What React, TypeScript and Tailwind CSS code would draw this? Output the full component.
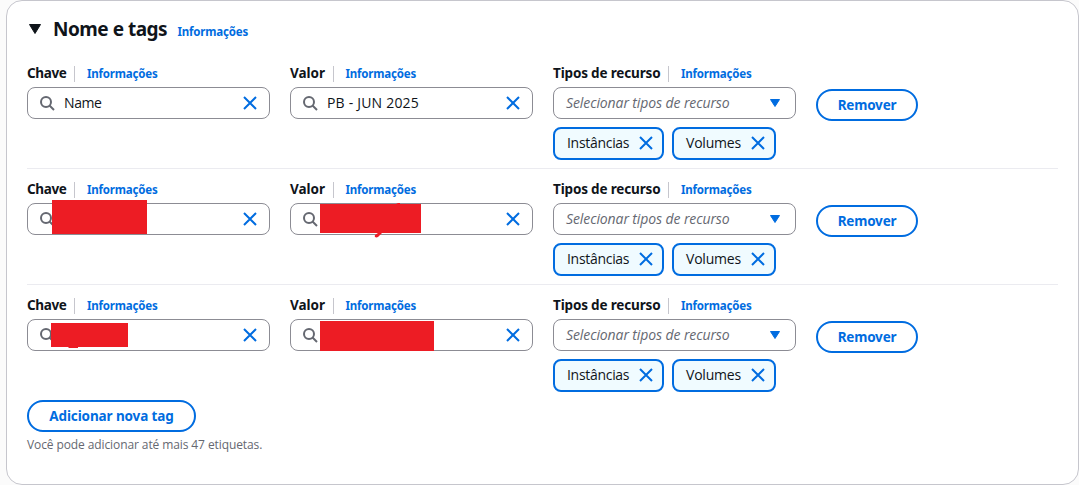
import type { ReactNode } from 'react';

function CloseIcon({ className = '' }: { className?: string }) {
  return (
    <svg viewBox="0 0 16 16" className={`h-4 w-4 shrink-0 ${className}`} fill="none" stroke="#006ce0" strokeWidth="2">
      <path d="m2 2 12 12M14 2 2 14" />
    </svg>
  );
}

function SearchIcon() {
  return (
    <svg viewBox="0 0 16 16" className="h-4 w-4 shrink-0" fill="none" stroke="#656871" strokeWidth="2">
      <circle cx="7" cy="7" r="5" />
      <path d="m15 15-4.5-4.5" />
    </svg>
  );
}

function InfoLink() {
  return (
    <a className="block pt-px font-['Noto_Sans',sans-serif] text-[11.5px] leading-5 font-bold tracking-[-0.19px] text-[#006ce0]">
      Informações
    </a>
  );
}

function Label({ children }: { children: ReactNode }) {
  return (
    <div className="mb-1 flex h-5 font-['Noto_Sans',sans-serif] text-[13.5px] leading-5 whitespace-nowrap">
      {children}
      <span className="mt-[3px] mr-3 h-4 w-px bg-[#c6c6cd]" />
      <InfoLink />
    </div>
  );
}

type SearchInputProps = { value?: string; textClass?: string; cover?: ReactNode };

function SearchInput({ value, textClass = '', cover }: SearchInputProps) {
  return (
    <div className="relative flex h-8 w-[243px] items-center rounded-lg border border-[#8c8c94] pr-[11px] pl-[11px]">
      <SearchIcon />
      <span className={`ml-[9px] flex-1 whitespace-nowrap ${textClass}`}>{value}</span>
      <CloseIcon />
      {cover}
    </div>
  );
}

function Chip({ children, className }: { children: ReactNode; className: string }) {
  return (
    <span className={`flex h-[33px] items-center justify-between rounded-lg border-2 border-[#006ce0] bg-[#f0fbff] pr-2 pb-px pl-3 whitespace-nowrap ${className}`}>
      {children}
      <CloseIcon />
    </span>
  );
}

type RowProps = { name?: string; value?: string; nameCover?: ReactNode; valueCover?: ReactNode; last?: boolean };

function TagRow({ name, value, nameCover, valueCover, last }: RowProps) {
  return (
    <div className={`flex h-[116px] gap-5 border-b pt-[10px] ${last ? 'border-transparent' : 'border-[#ebebf0]'}`}>
      <div>
        <Label>
          <b className="w-[47px] tracking-[-0.36px]">Chave</b>
        </Label>
        <SearchInput value={name} textClass="tracking-[-0.4px]" cover={nameCover} />
      </div>
      <div>
        <Label>
          <b className="w-[42.5px]">Valor</b>
        </Label>
        <SearchInput value={value} textClass="tracking-[0.2px]" cover={valueCover} />
      </div>
      <div>
        <Label>
          <b className="w-[115px] tracking-[-0.16px]">Tipos de recurso</b>
        </Label>
        <div className="flex h-8 w-[243px] items-center justify-between rounded-lg border border-[#8c8c94] pr-[15px] pl-3">
          <i className="tracking-[-0.1px] whitespace-nowrap text-[#656871]">Selecionar tipos de recurso</i>
          <svg viewBox="0 0 10 8" className="h-2 w-[10px]" fill="#006ce0" stroke="#006ce0" strokeLinejoin="round">
            <path d="M.5.5h9L5 7.5z" />
          </svg>
        </div>
        <div className="mt-2 flex gap-2">
          <Chip className="w-[111px] tracking-[-0.3px]">Instâncias</Chip>
          <Chip className="w-[104px] tracking-[-0.2px]">Volumes</Chip>
        </div>
      </div>
      <button className="mt-[26px] h-8 w-[102px] rounded-full border-2 border-[#006ce0] font-['Noto_Sans',sans-serif] text-[13.5px] leading-5 font-bold tracking-[-0.2px] text-[#006ce0]">
        Remover
      </button>
    </div>
  );
}

export default function App() {
  return (
    <div className="h-[485px] bg-[#fbfbfb] pl-[6px] font-['Open_Sans',sans-serif] text-sm text-[#0f141a]">
      <main className="h-[485px] rounded-2xl border border-[#c6c6cd] bg-white px-5">
        <header className="flex h-[52px] pt-[14px]">
          <svg viewBox="0 0 12 10" className="mt-[9px] ml-[2px] h-[10px] w-3" fill="#0f141a" stroke="#0f141a" strokeLinejoin="round">
            <path d="M.5.5h11L6 9.5z" />
          </svg>
          <h2 className="ml-3 w-[124.5px] font-['Noto_Sans',sans-serif] text-[19px] leading-7 font-bold tracking-[-0.5px] whitespace-nowrap">
            Nome e tags
          </h2>
          <span className="pt-[6px]">
            <InfoLink />
          </span>
        </header>
        <TagRow name="Name" value="PB - JUN 2025" />
        <TagRow
          nameCover={<span className="absolute top-[-4px] left-6 h-[34px] w-[95px] bg-[#ed1c24]" />}
          valueCover={
            <svg viewBox="0 0 101 36" className="absolute top-[-1px] left-[29px] h-9 w-[101px]" fill="#ed1c24">
              <path d="M0 1h76l2-1h2v1h21v29H62l-4 4c-2 1-4 0-3-2l3-2H0z" />
            </svg>
          }
        />
        <TagRow
          last
          nameCover={
            <svg viewBox="0 0 77 25" className="absolute top-[3px] left-[23px] h-[25px] w-[77px]" fill="#ed1c24">
              <path d="M0 0h77v24H27v1H18l-1-1H0z" />
            </svg>
          }
          valueCover={<span className="absolute top-px left-[29px] h-[30px] w-[114px] bg-[#ed1c24]" />}
        />
        <button className="-mt-px block h-8 w-[169px] rounded-full border-2 border-[#006ce0] font-['Noto_Sans',sans-serif] text-[13.5px] leading-5 font-bold tracking-[-0.11px] whitespace-nowrap text-[#006ce0]">
          Adicionar nova tag
        </button>
        <p className="mt-[5px] text-xs leading-4 tracking-[-0.1px] text-[#656871]">Você pode adicionar até mais 47 etiquetas.</p>
      </main>
    </div>
  );
}
